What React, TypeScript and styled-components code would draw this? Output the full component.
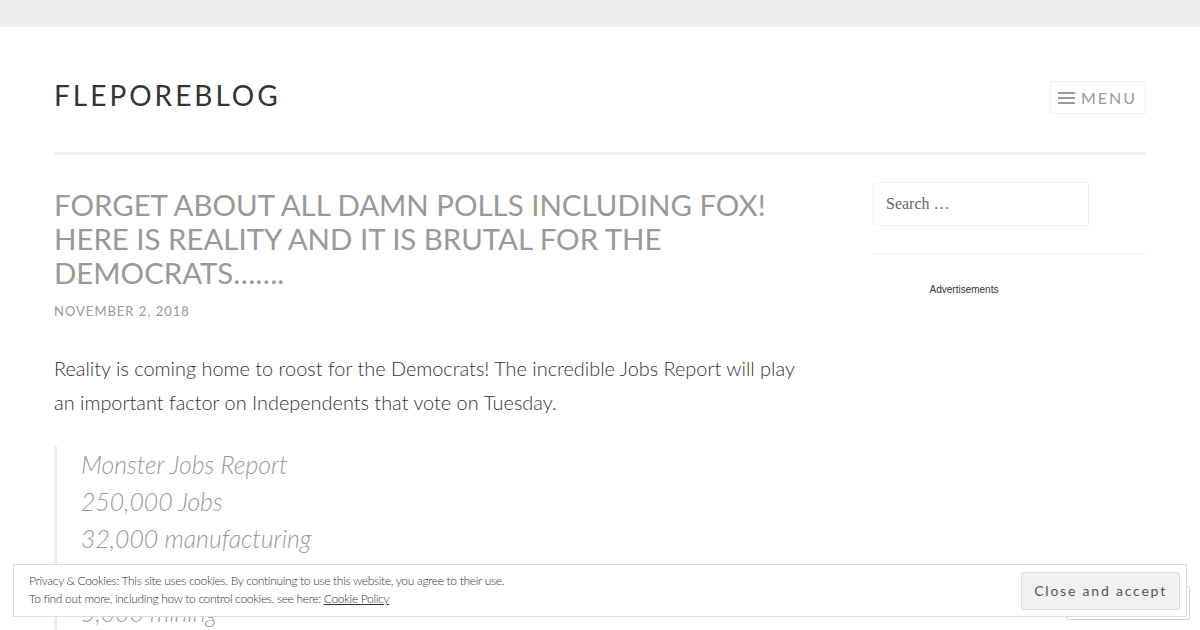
import React from "react";
import styled, { createGlobalStyle } from "styled-components";

const GlobalStyle = createGlobalStyle`
  html, body {
    margin: 0;
    padding: 0;
    background: #fff;
    height: 630px;
    overflow: hidden;
  }
  * {
    box-sizing: border-box;
  }
`;

const TopBar = styled.div`
  height: 27px;
  background: #eeeeee;
`;

const Page = styled.div`
  padding: 0 54px;
  font-family: Lato, "Open Sans", sans-serif;
`;

const Header = styled.header`
  display: flex;
  justify-content: space-between;
  align-items: center;
  height: 128px;
  padding-top: 10px;
  border-bottom: 3px solid #eeeeee;
`;

const SiteTitle = styled.h1`
  margin: 0;
  font-size: 28px;
  font-weight: 400;
  letter-spacing: 3px;
  color: #333;
`;

const MenuButton = styled.button`
  display: flex;
  align-items: center;
  gap: 6px;
  height: 33px;
  margin-top: 6px;
  padding: 0 8px 0 7px;
  background: #fff;
  border: 1px solid #eeeeee;
  border-radius: 2px;
  font-family: Lato, sans-serif;
  font-size: 16px;
  letter-spacing: 2px;
  color: #999;
`;

const Main = styled.div`
  display: flex;
  justify-content: space-between;
  padding-top: 33px;
`;

const Article = styled.article`
  width: 760px;
`;

const PostTitle = styled.h2`
  margin: 0;
  font-size: 29.4px;
  font-weight: 400;
  line-height: 34px;
  color: #999;
`;

const PostDate = styled.div`
  margin-top: 13px;
  font-size: 13px;
  letter-spacing: 1px;
  color: #999;
`;

const Paragraph = styled.p`
  margin: 32px 0 27px;
  font-size: 19.9px;
  font-weight: 300;
  line-height: 34px;
  color: #333;
`;

const Quote = styled.blockquote`
  margin: 0;
  padding-left: 24px;
  border-left: 3px solid #eeeeee;
  font-size: 24.8px;
  font-style: italic;
  font-weight: 300;
  line-height: 37px;
  color: #999;
`;

const QuoteLine = styled.div``;

const Sidebar = styled.aside`
  width: 273px;
  margin-top: -6px;
`;

const SearchInput = styled.input`
  width: 216px;
  height: 44px;
  padding: 0 12px;
  border: 1px solid #eeeeee;
  border-radius: 2px;
  font-family: "Liberation Serif", serif;
  font-size: 16px;
  color: #666;
  &::placeholder {
    color: #666;
  }
`;

const Divider = styled.div`
  margin-top: 27px;
  border-top: 1px solid #eeeeee;
`;

const AdLabel = styled.div`
  margin-top: 30px;
  width: 182px;
  text-align: center;
  font-family: "Liberation Sans", Arial, sans-serif;
  font-size: 10px;
  color: #333;
`;

const FollowBox = styled.div`
  position: fixed;
  right: 10px;
  bottom: 10px;
  width: 124px;
  height: 34px;
  background: #fff;
  border: 1px solid #d6d6d6;
  border-radius: 2px;
`;

const CookieBanner = styled.div`
  position: fixed;
  left: 13px;
  right: 13px;
  bottom: 13px;
  height: 53px;
  display: flex;
  align-items: center;
  justify-content: space-between;
  padding: 0 6px 2px 15px;
  background: #fff;
  border: 1px solid #dedede;
  font-family: Lato, sans-serif;
`;

const CookieText = styled.div`
  font-size: 12px;
  font-weight: 300;
  line-height: 18px;
  letter-spacing: -0.32px;
  color: #333;
  a {
    color: #333;
    text-decoration: underline;
  }
`;

const AcceptButton = styled.button`
  height: 38px;
  margin-top: 2px;
  padding: 0 12px;
  background: #f1f1f1;
  border: 1px solid #dcdcdc;
  border-radius: 3px;
  font-family: Lato, sans-serif;
  font-size: 14px;
  letter-spacing: 1.8px;
  color: #555;
`;

const HamburgerIcon = () => (
  <svg width="17" height="14" viewBox="0 0 17 14">
    <rect x="0" y="1" width="17" height="2" fill="#999" />
    <rect x="0" y="6" width="17" height="2" fill="#999" />
    <rect x="0" y="11" width="17" height="2" fill="#999" />
  </svg>
);

export default function App() {
  return (
    <>
      <GlobalStyle />
      <TopBar />
      <Page>
        <Header>
          <SiteTitle>FLEPOREBLOG</SiteTitle>
          <MenuButton>
            <HamburgerIcon />
            MENU
          </MenuButton>
        </Header>
        <Main>
          <Article>
            <PostTitle>
              FORGET ABOUT ALL DAMN POLLS INCLUDING FOX! HERE IS REALITY AND IT IS BRUTAL FOR THE
              DEMOCRATS…….
            </PostTitle>
            <PostDate>NOVEMBER 2, 2018</PostDate>
            <Paragraph>
              Reality is coming home to roost for the Democrats! The incredible Jobs Report will play
              an important factor on Independents that vote on Tuesday.
            </Paragraph>
            <Quote>
              <QuoteLine>Monster Jobs Report</QuoteLine>
              <QuoteLine>250,000 Jobs</QuoteLine>
              <QuoteLine>32,000 manufacturing</QuoteLine>
              <QuoteLine>30,000 construction</QuoteLine>
              <QuoteLine>5,000 mining</QuoteLine>
            </Quote>
          </Article>
          <Sidebar>
            <SearchInput placeholder="Search …" />
            <Divider />
            <AdLabel>Advertisements</AdLabel>
          </Sidebar>
        </Main>
      </Page>
      <FollowBox />
      <CookieBanner>
        <CookieText>
          <div>Privacy &amp; Cookies: This site uses cookies. By continuing to use this website, you agree to their use.</div>
          <div>
            To find out more, including how to control cookies, see here: <a href="#">Cookie Policy</a>
          </div>
        </CookieText>
        <AcceptButton>Close and accept</AcceptButton>
      </CookieBanner>
    </>
  );
}
